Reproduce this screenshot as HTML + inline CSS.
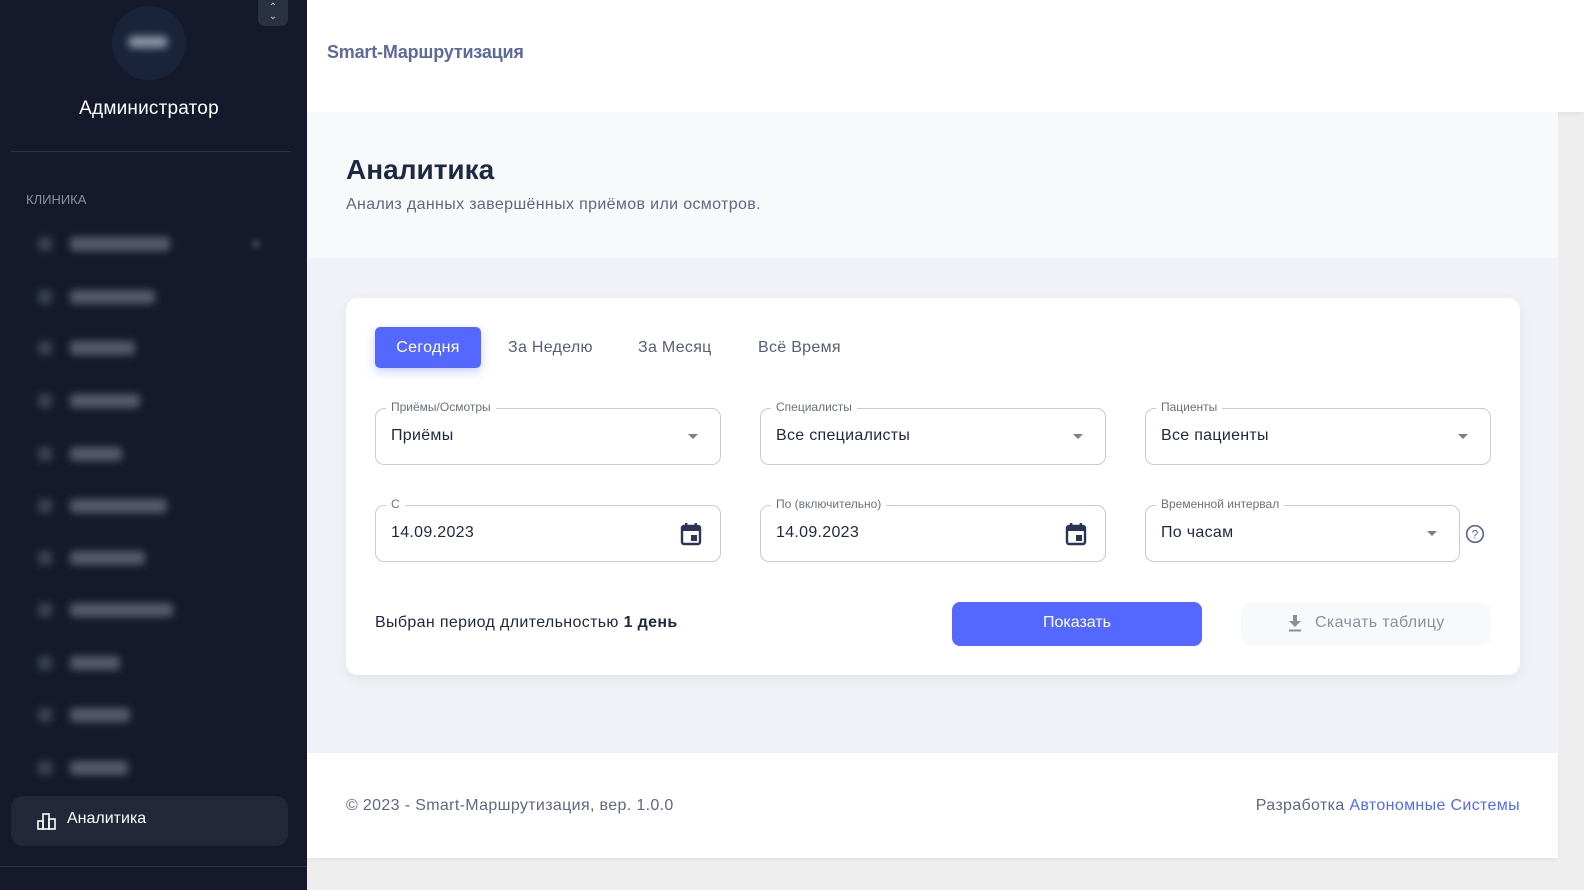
<!DOCTYPE html>
<html><head><meta charset="utf-8"><style>
*{box-sizing:border-box;margin:0;padding:0}
body{width:1584px;height:890px;overflow:hidden;font-family:"Liberation Sans",sans-serif;background:#eeeeef;position:relative}
.sb{position:absolute;left:0;top:0;width:307px;height:890px;background:#141a2b}
.av{position:absolute;left:112px;top:6px;width:74px;height:74px;border-radius:50%;background:#19243a}
.av i{position:absolute;left:16px;top:30px;width:40px;height:12px;background:#8a93a6;border-radius:6px;filter:blur(4px)}
.tog{position:absolute;left:258px;top:0;width:30px;height:26px;background:#2a3142;border-radius:0 0 7px 7px;color:#c6cad3;font-size:10px;text-align:center;line-height:9px;padding-top:3px}
.adm{position:absolute;left:0;width:298px;top:98px;text-align:center;color:#fff;font-size:19px;letter-spacing:.2px}
.hr{position:absolute;left:11px;top:151px;width:280px;height:1px;background:#2d3446}
.cl{position:absolute;left:26px;top:192px;color:#8b909b;font-size:13px}
.it{position:absolute;left:38px;height:14px;filter:blur(4px)}
.it b{position:absolute;left:0;top:0;width:14px;height:14px;background:#3c4355;border-radius:3px}
.it s{position:absolute;left:32px;top:0;height:14px;background:#555b6b;border-radius:4px}
.act{position:absolute;left:11px;top:796px;width:277px;height:50px;background:#222838;border-radius:12px;color:#fff;font-size:16px}
.hdr{position:absolute;left:307px;top:0;width:1277px;height:112px;background:#fff;box-shadow:0 2px 6px rgba(0,0,0,.06)}
.hdr span{position:absolute;left:20px;top:42px;color:#5d6a9a;font-size:18px;font-weight:bold;letter-spacing:-.2px}
.ph{position:absolute;left:307px;top:112px;width:1251px;height:146px;background:#f8f9fb}
.bd{position:absolute;left:307px;top:258px;width:1251px;height:495px;background:#f0f2f7}
.card{position:absolute;left:346px;top:298px;width:1174px;height:377px;background:#fff;border-radius:12px;box-shadow:0 4px 12px rgba(60,70,120,.08)}
.tab{position:absolute;top:327px;height:41px;line-height:41px;font-size:16px;color:#555f75;letter-spacing:.3px}
.fld{position:absolute;height:57px;border:1px solid #c9cbd0;border-radius:9px}
.fld label{position:absolute;left:10px;top:-9px;background:#fff;padding:0 5px;font-size:12px;color:#6b7080}
.fld span{position:absolute;left:15px;top:18px;font-size:16px;color:#1e2842;letter-spacing:.3px}
.car{position:absolute;top:25px;width:0;height:0;border-left:5px solid transparent;border-right:5px solid transparent;border-top:5px solid #7b7f8a}
.ft{position:absolute;left:307px;top:753px;width:1251px;height:105px;background:#fff;box-shadow:0 2px 4px rgba(0,0,0,.05)}
.ls{letter-spacing:.35px}
</style></head><body>
<div class="sb">
<div class="av"><i></i></div>
<div class="tog">&#8963;<br>&#8964;</div>
<div class="adm">Администратор</div>
<div class="hr"></div>
<div class="cl">КЛИНИКА</div>
<div class="it" style="top:237px"><b></b><s style="width:100px"></s></div>
<div style="position:absolute;left:252px;top:240px;width:8px;height:8px;background:#3a4152;filter:blur(3px)"></div>
<div class="it" style="top:290px"><b></b><s style="width:85px"></s></div>
<div class="it" style="top:341px"><b></b><s style="width:65px"></s></div>
<div class="it" style="top:394px"><b></b><s style="width:70px"></s></div>
<div class="it" style="top:447px"><b></b><s style="width:52px"></s></div>
<div class="it" style="top:499px"><b></b><s style="width:97px"></s></div>
<div class="it" style="top:551px"><b></b><s style="width:75px"></s></div>
<div class="it" style="top:603px"><b></b><s style="width:103px"></s></div>
<div class="it" style="top:656px"><b></b><s style="width:50px"></s></div>
<div class="it" style="top:708px"><b></b><s style="width:60px"></s></div>
<div class="it" style="top:761px"><b></b><s style="width:58px"></s></div>
<div class="act"><svg style="position:absolute;left:26px;top:16px" width="19" height="18" viewBox="0 0 19 18" fill="none" stroke="#fff" stroke-width="1.6"><rect x="1" y="9" width="5" height="8"/><rect x="6" y="2" width="6" height="15"/><rect x="12" y="7" width="6" height="10"/></svg><span style="position:absolute;left:56px;top:14px">Аналитика</span></div>
<div style="position:absolute;left:0;top:866px;width:307px;height:1px;background:#2d3446"></div>
</div>
<div class="hdr"><span>Smart-Маршрутизация</span></div>
<div class="ph"><div style="position:absolute;left:39px;top:42px;font-size:28px;font-weight:bold;color:#1e2842">Аналитика</div><div class="ls" style="position:absolute;left:39px;top:84px;font-size:16px;color:#5f6880">Анализ данных завершённых приёмов или осмотров.</div></div>
<div class="bd"></div>
<div class="card"></div>
<div class="tab" style="left:375px;width:106px;background:#5468ff;color:#fff;border-radius:5px;text-align:center;box-shadow:0 4px 10px rgba(84,104,255,.3)">Сегодня</div>
<div class="tab" style="left:508px">За Неделю</div>
<div class="tab" style="left:638px">За Месяц</div>
<div class="tab" style="left:758px">Всё Время</div>
<div class="fld" style="left:375px;top:408px;width:346px"><label>Приёмы/Осмотры</label><span>Приёмы</span><i class="car" style="left:312px"></i></div>
<div class="fld" style="left:760px;top:408px;width:346px"><label>Специалисты</label><span>Все специалисты</span><i class="car" style="left:312px"></i></div>
<div class="fld" style="left:1145px;top:408px;width:346px"><label>Пациенты</label><span>Все пациенты</span><i class="car" style="left:312px"></i></div>
<div class="fld" style="left:375px;top:505px;width:346px"><label>С</label><span>14.09.2023</span><svg style="position:absolute;left:304px;top:16px" width="22" height="24" viewBox="0 0 22 24"><rect x="2" y="4" width="18" height="18" rx="2" fill="none" stroke="#2a3457" stroke-width="2.4"/><rect x="2" y="4" width="18" height="5" fill="#2a3457"/><rect x="5" y="1" width="2.4" height="5" fill="#2a3457"/><rect x="14.6" y="1" width="2.4" height="5" fill="#2a3457"/><rect x="11" y="13" width="6" height="6" fill="#2a3457"/></svg></div>
<div class="fld" style="left:760px;top:505px;width:346px"><label>По (включительно)</label><span>14.09.2023</span><svg style="position:absolute;left:304px;top:16px" width="22" height="24" viewBox="0 0 22 24"><rect x="2" y="4" width="18" height="18" rx="2" fill="none" stroke="#2a3457" stroke-width="2.4"/><rect x="2" y="4" width="18" height="5" fill="#2a3457"/><rect x="5" y="1" width="2.4" height="5" fill="#2a3457"/><rect x="14.6" y="1" width="2.4" height="5" fill="#2a3457"/><rect x="11" y="13" width="6" height="6" fill="#2a3457"/></svg></div>
<div class="fld" style="left:1145px;top:505px;width:315px"><label>Временной интервал</label><span>По часам</span><i class="car" style="left:281px"></i></div>
<svg style="position:absolute;left:1465px;top:524px" width="20" height="20" viewBox="0 0 20 20"><circle cx="10" cy="10" r="8.3" fill="none" stroke="#5d6a9a" stroke-width="1.7"/><text x="10" y="14.5" font-size="12" text-anchor="middle" fill="#5d6a9a" font-family="Liberation Sans">?</text></svg>
<div class="ls" style="position:absolute;left:375px;top:614px;font-size:16px;color:#1e2842">Выбран период длительностью <b>1 день</b></div>
<div style="position:absolute;left:952px;top:602px;width:250px;height:44px;background:#5468ff;border-radius:8px;color:#fff;font-size:16px;text-align:center;line-height:42px">Показать</div>
<div style="position:absolute;left:1241px;top:602px;width:250px;height:44px;background:#f8f9fa;border-radius:10px;color:#8b909b;font-size:16px;line-height:42px"><svg style="position:absolute;left:47px;top:13px" width="14" height="17" viewBox="0 0 14 17"><path d="M5 0h4v6h4l-6 6-6-6h4z" fill="#8b909b"/><rect x="1" y="14.5" width="12" height="2" fill="#8b909b"/></svg><span class="ls" style="position:absolute;left:74px">Скачать таблицу</span></div>
<div class="ft"><span class="ls" style="position:absolute;left:39px;top:44px;font-size:16px;color:#5f6880">© 2023 - Smart-Маршрутизация, вер. 1.0.0</span><span class="ls" style="position:absolute;right:38px;top:44px;font-size:16px;color:#5f6880">Разработка <span style="color:#5468ff">Автономные Системы</span></span></div>
</body></html>
